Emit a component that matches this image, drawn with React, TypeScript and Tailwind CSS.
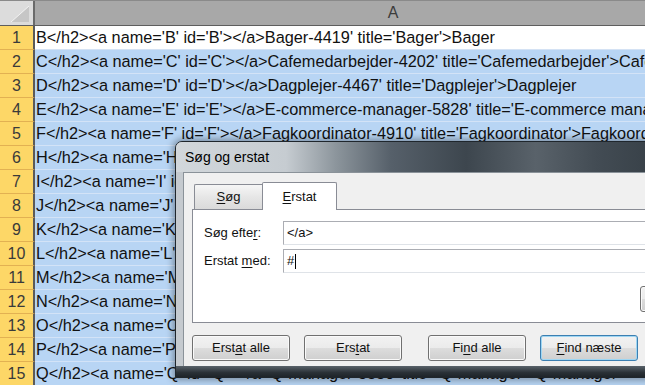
import React from "react";

const rows = [
  "B</h2><a name='B' id='B'></a>Bager-4419' title='Bager'>Bager",
  "C</h2><a name='C' id='C'></a>Cafemedarbejder-4202' title='Cafemedarbejder'>Cafemedarbejder",
  "D</h2><a name='D' id='D'></a>Dagplejer-4467' title='Dagplejer'>Dagplejer",
  "E</h2><a name='E' id='E'></a>E-commerce-manager-5828' title='E-commerce manager'>E-commerce manager",
  "F</h2><a name='F' id='F'></a>Fagkoordinator-4910' title='Fagkoordinator'>Fagkoordinator",
  "H</h2><a name='H' id='H'></a>Hjemmehjælper-4310' title='Hjemmehjælper'>Hjemmehjælper",
  "I</h2><a name='I' id='I'></a>IT-konsulent-4521' title='IT-konsulent'>IT-konsulent",
  "J</h2><a name='J' id='J'></a>Jurist-4133' title='Jurist'>Jurist",
  "K</h2><a name='K' id='K'></a>Kok-4012' title='Kok'>Kok",
  "L</h2><a name='L' id='L'></a>Lagerarbejder-4688' title='Lagerarbejder'>Lagerarbejder",
  "M</h2><a name='M' id='M'></a>Maler-4251' title='Maler'>Maler",
  "N</h2><a name='N' id='N'></a>Netværksadministrator-4877' title='Netværksadministrator'>Netværksadministrator",
  "O</h2><a name='O' id='O'></a>Ordblindelærer-5102' title='Ordblindelærer'>Ordblindelærer",
  "P</h2><a name='P' id='P'></a>Pædagog-4020' title='Pædagog'>Pædagog",
  "Q</h2><a name='Q' id='Q'></a>Q-manager-5330' title='Q-manager'>Q-manager",
];

const btn =
  "h-[26px] w-[98px] shrink-0 rounded-[3px] border text-[13px] text-[#111] flex items-center justify-center bg-[linear-gradient(#f2f2f2,#ebebeb_50%,#dddddd_50%,#cfcfcf)]";

function Button({ children, focused, className = "" }: { children: React.ReactNode; focused?: boolean; className?: string }) {
  return (
    <div
      className={
        btn +
        (focused
          ? " border-[#3c7fb1] shadow-[inset_0_0_0_1px_#9ed6f3]"
          : " border-[#707070] shadow-[inset_0_0_0_1px_#fafafa]") +
        " " +
        className
      }
    >
      {children}
    </div>
  );
}

function U({ children }: { children: React.ReactNode }) {
  return <span className="underline underline-offset-[2px]">{children}</span>;
}

export default function App() {
  return (
    <div className="relative w-[645px] h-[385px] overflow-hidden bg-white font-['Liberation_Sans',Arial,sans-serif]">
      {/* column header */}
      <div className="flex h-[26px] border-b border-[#5e5e5e] border-t border-t-[#8a8a8a]">
        <div className="w-[35px] shrink-0 bg-[#dcdcdc] border-r-2 border-[#6a6a6a] flex items-end justify-end pr-[4px] pb-[3px]">
          <svg width="18" height="16" viewBox="0 0 18 16">
            <polygon points="18,0 18,16 0,16" fill="#c6c6c6" />
            <line x1="0" y1="16" x2="18" y2="0" stroke="#f2f2f2" strokeWidth="1" />
          </svg>
        </div>
        <div className="w-[716px] shrink-0 bg-[#a8a8a8] flex items-center justify-center text-[16px] text-[#3c3c3c]">
          A
        </div>
      </div>

      {/* rows */}
      {rows.map((t, i) => (
        <div key={i} className="flex h-[24px]">
          <div className="w-[35px] shrink-0 bg-[#fdd767] border-r-2 border-r-[#5a5a5a] border-b border-b-[#e2b152] flex items-center justify-center text-[16px] text-[#3a3a3a]">
            {i + 1}
          </div>
          <div
            className={
              "w-[716px] shrink-0 pl-[1px] flex items-center whitespace-nowrap overflow-hidden text-[16.3px] text-[#111] border-b " +
              (i === 0 ? "bg-white border-b-[#d4e2f4]" : "bg-[#b8d5f4] border-b-[#d3e3f7]")
            }
          >
            {t}
          </div>
        </div>
      ))}

      {/* dialog */}
      <div className="absolute left-[175px] top-[141px] w-[520px] h-[237px] rounded-t-[7px] border border-[#1f262c] bg-[#c5cacf] shadow-[0_0_7px_2px_rgba(0,0,0,0.35)] flex flex-col overflow-hidden">
        <div className="h-[30px] shrink-0 flex items-center pl-[9px] text-[14px] text-black bg-[linear-gradient(90deg,#d2d7db_0px,#c6ccd1_110px,#8c959c_160px,#56606a_215px,#3d464e_290px,#59626a_360px,#434c54_420px,#2f383f_520px)]">
          Søg og erstat
        </div>
        <div className="flex-1 ml-[7px] bg-[#f0f0f0] border-l border-t border-[#8a9299] flex flex-col pl-[8px] pt-[8px]">
          {/* tabs */}
          <div className="flex items-end h-[28px] pl-[2px] relative z-10">
            <div className="w-[68px] h-[25px] border-l border-t border-[#898c95] rounded-tl-[2px] bg-[linear-gradient(#f6f6f6,#e6e6e6_50%,#dadada)] flex items-center justify-center text-[13px] text-[#111]">
              <U>S</U>øg
            </div>
            <div className="w-[75px] h-[28px] -mb-px border-x border-t border-[#898c95] rounded-t-[2px] bg-white flex items-center justify-center text-[13px] text-[#111]">
              <U>E</U>rstat
            </div>
          </div>
          {/* panel */}
          <div className="h-[114px] w-[520px] bg-white border border-[#898c95] pl-[11px] pt-[11px] text-[13px] text-[#111]">
            <div className="flex items-center h-[24px]">
              <div className="w-[79px] shrink-0">
                Søg efte<U>r</U>:
              </div>
              <div className="w-[400px] h-[24px] border border-[#abadb3] border-b-[#dfe3e8] bg-white flex items-center pl-[3px]">
                &lt;/a&gt;
              </div>
            </div>
            <div className="flex items-center h-[24px] mt-[4px]">
              <div className="w-[79px] shrink-0">
                Erstat <U>m</U>ed:
              </div>
              <div className="w-[400px] h-[24px] border border-[#abadb3] border-b-[#dfe3e8] bg-white flex items-center pl-[3px]">
                #<span className="inline-block w-px h-[15px] bg-black ml-px" />
              </div>
            </div>
            <div className="flex mt-[13px] ml-[436px]">
              <Button>Indstillinger &gt;&gt;</Button>
            </div>
          </div>
          {/* buttons */}
          <div className="flex mt-[12px] gap-[14px]">
            <Button>
              Erst<U>a</U>t alle
            </Button>
            <Button>
              Ers<U>t</U>at
            </Button>
            <Button className="ml-[12px]">
              Fi<U>n</U>d alle
            </Button>
            <Button focused>
              <U>F</U>ind næste
            </Button>
            <Button>Luk</Button>
          </div>
        </div>
        <div className="h-[11px] shrink-0 bg-[linear-gradient(#59626a,#2a3137_60%,#1e2429)]" />
      </div>
    </div>
  );
}
